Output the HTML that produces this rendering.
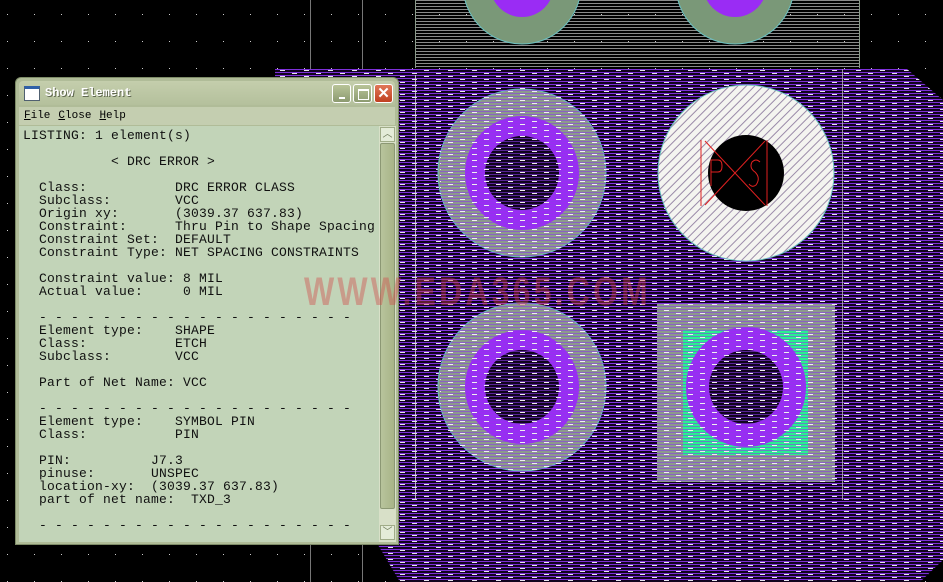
<!DOCTYPE html>
<html><head><meta charset="utf-8"><style>
html,body{margin:0;padding:0;background:#000;width:943px;height:582px;overflow:hidden;position:relative;font-family:"Liberation Sans",sans-serif}
svg{position:absolute;left:0;top:0}
#dlg{position:absolute;left:15px;top:77px;width:384px;height:468px;background:#b0bc98;border:1px solid #7e8c68;box-sizing:border-box;border-radius:6px 6px 0 0}
#title{position:absolute;left:3px;top:3px;right:3px;height:24px;background:linear-gradient(#c4ceac,#b4c09c);border-radius:4px 4px 0 0}
#title .ic{position:absolute;left:5px;top:5px;width:14px;height:11px;background:#fff;border:1px solid #506070;border-top:3px solid #3060a8}
#title .t{position:absolute;left:26px;top:5px;font:bold 12px "Liberation Mono",monospace;color:#fff;text-shadow:1px 1px 0 #606850}
.b{position:absolute;top:3px;width:19px;height:19px;border:1px solid #fff;border-radius:3px;background:linear-gradient(#b8c498,#8c9a70);box-sizing:border-box}
#menu{position:absolute;left:3px;top:29px;right:3px;height:18px;background:#c4ceb0;font:11px "Liberation Mono",monospace;color:#000;line-height:18px;padding-left:5px}
#menu span{margin-right:8px}
#content{position:absolute;left:3px;top:48px;width:360px;height:416px;background:#c2d4b8;overflow:hidden}
pre{margin:0;position:absolute;left:4px;top:3px;font:13px/13px "Liberation Mono",monospace;color:#101010;letter-spacing:0.2px}
#sb{position:absolute;left:363px;top:48px;width:17px;height:416px;background:#d8e0c8}
#sb .a{position:absolute;left:1px;width:15px;height:15px;background:#e4ecd8;border:1px solid #a0ac88;box-sizing:border-box;color:#6c7858;font:10px sans-serif;text-align:center;line-height:13px}
#sb .th{position:absolute;left:1px;top:17px;width:15px;height:366px;background:linear-gradient(90deg,#b8c49c,#a8b488);border:1px solid #8c9874;box-sizing:border-box;border-radius:2px}
#wm{position:absolute;left:304px;top:270px;font:bold 40px "Liberation Sans",sans-serif;color:rgba(210,70,70,0.4);transform:scaleX(0.8);transform-origin:left;letter-spacing:4px;z-index:5}
</style></head><body>
<svg width="943" height="582" viewBox="0 0 943 582">
<defs>
<pattern id="hs" width="3" height="3" patternUnits="userSpaceOnUse"><rect width="3" height="1" fill="#8a8a8a"/></pattern>
<pattern id="pp" width="24" height="6" patternUnits="userSpaceOnUse">
<rect width="24" height="6" fill="#10041e"/>
<rect y="0" width="24" height="1" fill="#7e30d8"/>
<rect y="3" width="24" height="1" fill="#7e30d8"/>
<rect x="4" y="1" width="5" height="1" fill="#e8e8f0"/>
<rect x="16" y="4" width="5" height="1" fill="#e8e8f0"/>
</pattern>
<pattern id="ov" width="24" height="6" patternUnits="userSpaceOnUse">
<rect y="0" width="24" height="1" fill="#8a3ae8" opacity=".6"/>
<rect y="3" width="24" height="1" fill="#8a3ae8" opacity=".6"/>
<rect x="4" y="1" width="5" height="1" fill="#f0f0f0"/>
<rect x="16" y="4" width="5" height="1" fill="#f0f0f0"/>
</pattern>
<pattern id="dg" width="6" height="6" patternUnits="userSpaceOnUse" patternTransform="rotate(45)"><rect width="6" height="6" fill="#f4f4f0"/><rect width="1" height="6" fill="#9a8aa8"/></pattern>
<pattern id="dots" width="27" height="27" patternUnits="userSpaceOnUse" x="7" y="14"><rect width="1" height="1" fill="#ccc"/></pattern>
</defs>
<rect width="943" height="582" fill="url(#dots)"/>
<line x1="310.5" y1="0" x2="310.5" y2="582" stroke="#777"/>
<line x1="362.5" y1="0" x2="362.5" y2="582" stroke="#777"/>
<rect x="415" y="0" width="445" height="68" fill="url(#hs)"/>
<line x1="415.5" y1="0" x2="415.5" y2="68" stroke="#8a9a8a"/>
<line x1="859.5" y1="0" x2="859.5" y2="68" stroke="#8a9a8a"/>
<circle cx="522" cy="-15" r="59" fill="#7a9878" stroke="#6ac0c0"/>
<circle cx="522" cy="-15" r="32" fill="#9a2cf4"/>
<circle cx="735" cy="-15" r="59" fill="#7a9878" stroke="#6ac0c0"/>
<circle cx="735" cy="-15" r="32" fill="#9a2cf4"/>
<polygon points="275,69 907,69 943,100 943,560 920,582 400,582 378,545 275,545" fill="url(#pp)"/>
<line x1="415.5" y1="75" x2="415.5" y2="500" stroke="#ddd" stroke-width=".8"/>
<line x1="842.5" y1="69" x2="842.5" y2="500" stroke="#bbb" stroke-width=".8"/>
<circle cx="522" cy="173" r="84" fill="#8c9a8c" stroke="#6ac0c0"/>
<circle cx="522" cy="173" r="57" fill="#9a2cf4"/>
<circle cx="522" cy="173" r="37" fill="#10041e"/>
<circle cx="522" cy="387" r="84" fill="#8c9a8c" stroke="#6ac0c0"/>
<circle cx="522" cy="387" r="57" fill="#9a2cf4"/>
<circle cx="522" cy="387" r="37" fill="#10041e"/>
<rect x="657" y="304" width="178" height="178" fill="#8c9a8c"/>
<rect x="683" y="330" width="125" height="125" fill="#2af090"/>
<circle cx="746" cy="387" r="60" fill="#9a2cf4"/>
<circle cx="746" cy="387" r="37" fill="#10041e"/>
<rect x="440" y="88" width="180" height="172" fill="url(#ov)"/>
<rect x="440" y="302" width="400" height="182" fill="url(#ov)"/>
<circle cx="746" cy="173" r="88" fill="url(#dg)" stroke="#6ac0c0"/>
<circle cx="746" cy="173" r="38" fill="#000"/>
<g stroke="#e02020" stroke-width="1" fill="none">
<line x1="701" y1="140" x2="701" y2="206"/><line x1="767" y1="140" x2="767" y2="206"/>
<line x1="705" y1="141" x2="765" y2="205"/><line x1="765" y1="141" x2="705" y2="205"/>
<path d="M711 186 V160 H718 Q722 160 722 166 Q722 172 718 172 H711"/>
<path d="M760 162 Q756 158 752 162 Q749 168 755 172 Q761 178 756 185 Q752 188 749 184"/>
</g>
</svg>
<div id="wm">WWW.EDA365.COM</div>
<div id="dlg">
<div id="title"><div class="ic"></div><div class="t">Show Element</div>
<div class="b" style="left:313px"><div style="position:absolute;left:6px;top:12px;width:6px;height:2px;background:#fff"></div></div>
<div class="b" style="left:334px"><div style="position:absolute;left:4px;top:4px;width:9px;height:8px;border:1px solid #fff;border-top-width:2px"></div></div>
<div class="b" style="left:355px;background:linear-gradient(#e07858,#c04020);color:#fff;font:bold 15px sans-serif;text-align:center;line-height:17px">✕</div>
</div>
<div id="menu"><span><u>F</u>ile</span><span><u>C</u>lose</span><span><u>H</u>elp</span></div>
<div id="content"><pre>LISTING: 1 element(s)

           &lt; DRC ERROR &gt;

  Class:           DRC ERROR CLASS
  Subclass:        VCC
  Origin xy:       (3039.37 637.83)
  Constraint:      Thru Pin to Shape Spacing
  Constraint Set:  DEFAULT
  Constraint Type: NET SPACING CONSTRAINTS

  Constraint value: 8 MIL
  Actual value:     0 MIL

  - - - - - - - - - - - - - - - - - - - -
  Element type:    SHAPE
  Class:           ETCH
  Subclass:        VCC

  Part of Net Name: VCC

  - - - - - - - - - - - - - - - - - - - -
  Element type:    SYMBOL PIN
  Class:           PIN

  PIN:          J7.3
  pinuse:       UNSPEC
  location-xy:  (3039.37 637.83)
  part of net name:  TXD_3

  - - - - - - - - - - - - - - - - - - - -</pre></div>
<div id="sb"><div class="a" style="top:1px">︿</div><div class="th"></div><div class="a" style="top:399px">﹀</div></div>
</div>
</body></html>
